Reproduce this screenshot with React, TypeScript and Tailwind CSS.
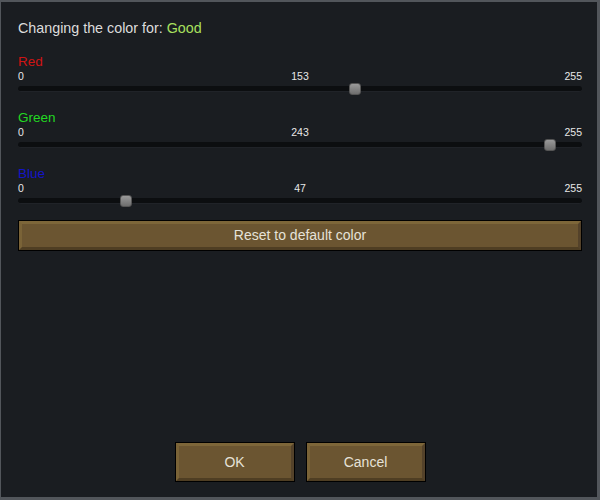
const channels = [
    { name: 'Red', color: 'text-[#d01414]', value: 153 },
    { name: 'Green', color: 'text-[#22d822]', value: 243 },
    { name: 'Blue', color: 'text-[#1414c8]', value: 47 },
];

function Slider({ value }: { value: number }) {
    const pct = value / 255;
    return (
        <div className="relative mt-[4px] h-[6px] rounded-[3px] bg-[#0c0e10] border-b border-[#202328]">
            <div
                className="absolute top-[-3px] h-[12px] w-[12px] rounded-[3px] bg-gradient-to-b from-[#9a9a9a] to-[#6e6e6e] border border-[#555]"
                style={{ left: `calc(${pct} * (100% - 12px))` }}
            />
        </div>
    );
}

function BevelButton({ label, className }: { label: string; className?: string }) {
    return (
        <button
            className={`border border-black bg-[#6b5531] text-[#e6e2d8] text-[14px] ${className ?? ''}`}
        >
            <div className="h-full w-full border-[3px] border-t-[#7d6639] border-l-[#7a6337] border-b-[#4f3e23] border-r-[#54422a] flex items-center justify-center">
                {label}
            </div>
        </button>
    );
}

export default function App() {
    return (
        <div
            className="w-[600px] h-[500px] bg-[#1a1d21] border-t-2 border-l border-r-[3px] border-b-[3px] border-[#52565b] flex flex-col pl-[17px] pr-[15px] pt-[18px]"
            style={{ fontFamily: '"Liberation Sans", Arial, sans-serif' }}
        >
            <div className="text-[14.3px] leading-[16px] text-[#dcdcdc]">
                Changing the color for: <span className="text-[#a8e05e]">Good</span>
            </div>

            {channels.map((c) => (
                <div key={c.name} className="mt-[18px]">
                    <div className={`text-[13.5px] leading-[16px] ${c.color}`}>{c.name}</div>
                    <div className="flex justify-between text-[10.5px] leading-[12px] text-[#e8e8e8]">
                        <span className="w-[40px]">0</span>
                        <span>{c.value}</span>
                        <span className="w-[40px] text-right">255</span>
                    </div>
                    <Slider value={c.value} />
                </div>
            ))}

            <BevelButton label="Reset to default color" className="mt-[16px] h-[31px] w-full" />

            <div className="mt-auto mb-[15px] flex justify-center gap-[11px]">
                <BevelButton label="OK" className="h-[40px] w-[120px]" />
                <BevelButton label="Cancel" className="h-[40px] w-[120px]" />
            </div>
        </div>
    );
}
